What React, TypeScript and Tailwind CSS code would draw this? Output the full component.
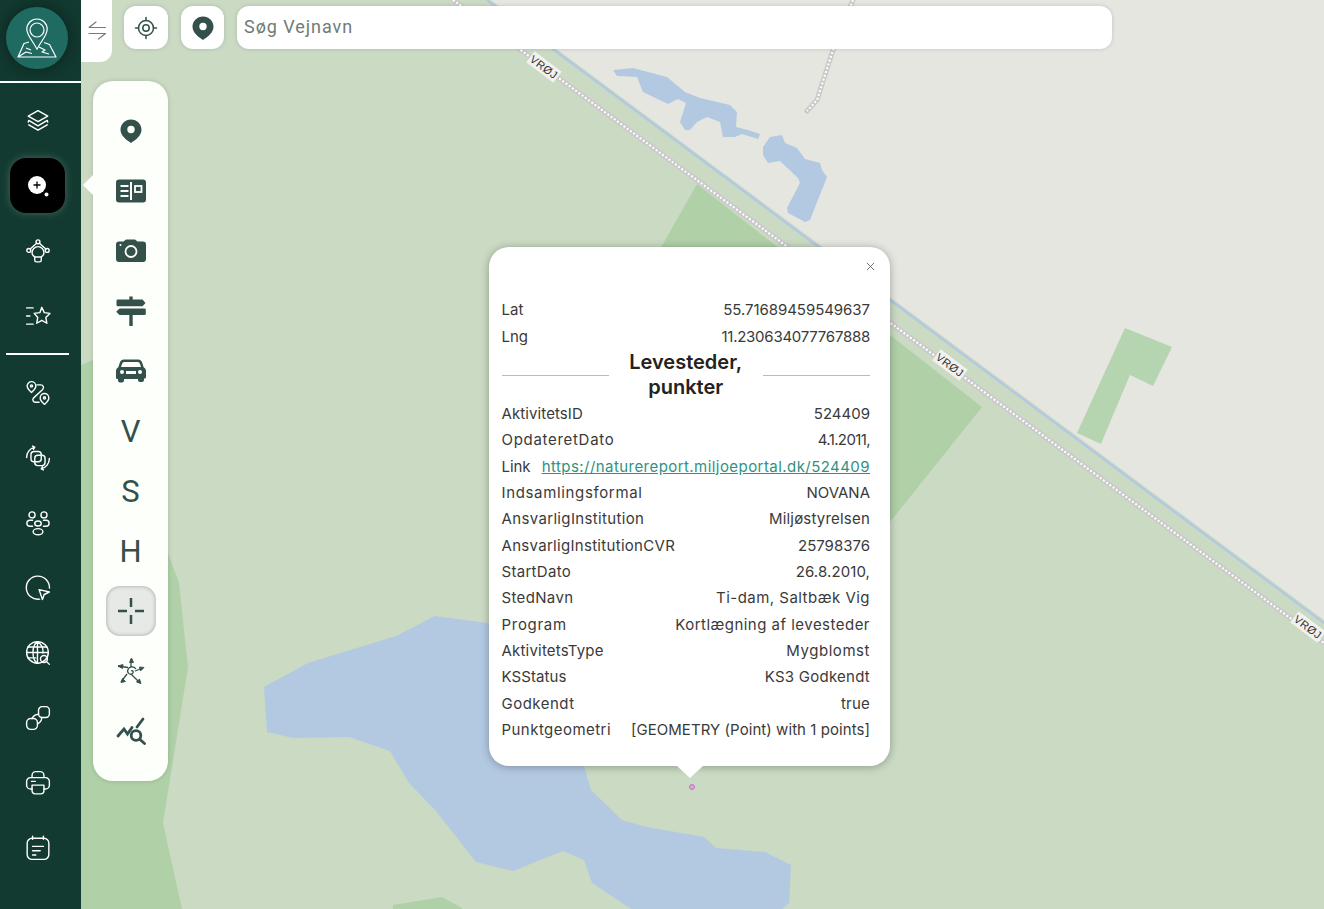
import React from 'react';

const sans = 'font-["Inter","Liberation_Sans",sans-serif]';

const Line: React.FC<{ className?: string; children: React.ReactNode }> = ({ className = 'h-7 w-7', children }) => (
  <svg viewBox="0 0 24 24" className={className} fill="none" stroke="currentColor" strokeWidth="1.300" strokeLinecap="round" strokeLinejoin="round">
    {children}
  </svg>
);

const sideTop = [
  <path key="a" d="M12 2.500 21 7.500 12 12.500 3 7.500Z M3.500 11.500 12 16.500 20.500 11.500 M3.500 15.500 12 20.500 20.500 15.500 M3.500 11.500 3 13 M20.500 11.500 21 13" />,
  null,
  <g key="c"><circle cx="12" cy="3.500" r="1.800" /><circle cx="3.500" cy="11.500" r="1.800" /><circle cx="20.500" cy="11.500" r="1.800" /><path d="M10.700 4.800 4.800 10.200 M13.300 4.800 19.200 10.200 M9 17.500c-1.500-1-2.500-2.300-2.500-4a5.500 5.500 0 0 1 11 0c0 1.700-1 3-2.500 4Z M9 17.500v3a1.500 1.500 0 0 0 1.500 1.500h3a1.500 1.500 0 0 0 1.500-1.500v-3" /></g>,
  <g key="d"><path d="M15.500 4l2.300 4.900 5.200.7-3.800 3.700 1 5.400-4.700-2.700-4.700 2.700 1-5.400L8.500 9.600l5.200-.7Z" /><path d="M1.500 4.500h6 M1.500 12h3 M1.500 19.500h6" /></g>,
];

const sideBottom = [
  <g key="e"><path d="M6 1.500a4 4 0 0 1 4 4c0 2.500-2.500 4.500-4 6-1.500-1.500-4-3.500-4-6a4 4 0 0 1 4-4Z" /><circle cx="6" cy="5.500" r="1" /><path d="M18 12.500a4 4 0 0 1 4 4c0 2.500-2.500 4.500-4 6-1.500-1.500-4-3.500-4-6a4 4 0 0 1 4-4Z" /><circle cx="18" cy="16.500" r="1" /><path d="M11 4.500h3.500a2.500 2.500 0 0 1 1.800 4.300L8 16.500a2.300 2.300 0 0 0 1.700 4H13" /></g>,
  <g key="f"><rect x="5.500" y="6" width="9.500" height="9.500" rx="2.800" /><rect x="9" y="9.500" width="9.500" height="9.500" rx="2.800" /><path d="M1.500 11.500c0-4.500 3-8.500 7.500-9.500 M7 1l2 1-1.200 2 M22.500 12.500c0 4.500-3 8.500-7.500 9.500 M17 23l-2-1 1.200-2" /></g>,
  <g key="g"><circle cx="6.500" cy="4.500" r="2.800" /><circle cx="17.500" cy="4.500" r="2.800" /><ellipse cx="12" cy="12.500" rx="3" ry="2.300" /><ellipse cx="12" cy="20" rx="4.500" ry="2.800" /><path d="M7 9.500H4.500a2.500 2.500 0 0 0 0 5.500H7 M17 9.500h2.500a2.500 2.500 0 0 1 0 5.500H17" /></g>,
  <g key="h"><path d="M13.500 22.300A10.700 10.700 0 1 1 22.600 12" /><path d="M13 13.500l9.500 2.200-4.800 2.300-1.600 4.700Z" /></g>,
  <g key="i"><circle cx="11.500" cy="11.500" r="10" /><path d="M1.500 11.500h20 M2.800 6.500h17.500 M2.800 16.500h7 M11.500 1.500v20 M11.500 1.500C6 5 6 18 11.500 21.500 M11.500 1.500C17 5 17 9 16.500 12" /><circle cx="17.500" cy="17.500" r="3.200" /><path d="M20 20l2.500 2.500" /></g>,
  <g key="j"><rect x="12.500" y="1.500" width="10" height="10" rx="3.200" /><rect x="1.500" y="12.500" width="10" height="10" rx="3.800" /><path d="M12.500 8.500a7 7 0 0 0-6 4 M15.500 11.500a7 7 0 0 1-4 6" /></g>,
  <g key="k"><path d="M6.500 7V5a3.500 3.500 0 0 1 3.500-3.500h4A3.500 3.500 0 0 1 17.500 5v2 M6.500 17.500H5A3.500 3.500 0 0 1 1.500 14v-3.500A3.500 3.500 0 0 1 5 7h14a3.500 3.500 0 0 1 3.500 3.500V14a3.500 3.500 0 0 1-3.500 3.500h-1.500" /><path d="M6.500 14h11v5a3 3 0 0 1-3 3h-5a3 3 0 0 1-3-3Z M6 10.500h3.500" /></g>,
  <g key="l"><rect x="2" y="3" width="20" height="19.500" rx="4.500" /><path d="M7 1v3 M17 1v3 M7 10.500h10 M7 14.500h7 M7 18.500h3" /></g>,
];

const PanelIcon: React.FC<{ children: React.ReactNode }> = ({ children }) => (
  <svg viewBox="0 0 30 30" className="h-[30px] w-[30px] fill-[#34504b]">
    {children}
  </svg>
);

const PIN = 'M15 3.500c5.800 0 10.500 4.600 10.500 10.300 0 5.400-5 9.700-10.500 13.200C9.500 23.500 4.500 19.200 4.500 13.800 4.500 8.100 9.200 3.500 15 3.500Z';

const PinFilled = () => (
  <path fillRule="evenodd" d={`${PIN} M15 9.800a3.700 3.700 0 1 0 0 7.400 3.700 3.700 0 0 0 0-7.400Z`} />
);

const rows: [string, React.ReactNode, string, string][] = [
  ['AktivitetsID', '524409', 'tracking-[0.1px]', ''],
  ['OpdateretDato', '4.1.2011,', 'tracking-[0.7px]', 'tracking-[-0.6px]'],
  ['Link', <a href="#" className="text-[#2e9283] underline">https://naturereport.miljoeportal.dk/524409</a>, 'tracking-[-0.1px]', 'tracking-[0.44px]'],
  ['Indsamlingsformal', 'NOVANA', 'tracking-[0.65px]', ''],
  ['AnsvarligInstitution', 'Miljøstyrelsen', 'tracking-[0.35px]', 'tracking-[0.2px]'],
  ['AnsvarligInstitutionCVR', '25798376', 'tracking-[0.3px]', ''],
  ['StartDato', '26.8.2010,', 'tracking-[0.3px]', 'tracking-[0.1px]'],
  ['StedNavn', 'Ti-dam, Saltbæk Vig', 'tracking-[0.35px]', 'tracking-[0.47px]'],
  ['Program', 'Kortlægning af levesteder', 'tracking-[0.7px]', 'tracking-[0.48px]'],
  ['AktivitetsType', 'Mygblomst', 'tracking-[0.2px]', 'tracking-[0.55px]'],
  ['KSStatus', 'KS3 Godkendt', 'tracking-[0.1px]', 'tracking-[0.25px]'],
  ['Godkendt', 'true', 'tracking-[0.5px]', 'tracking-[0.2px]'],
  ['Punktgeometri', '[GEOMETRY (Point) with 1 points]', 'tracking-[0.46px]', 'tracking-[0.06px]'],
];

const Row: React.FC<{ label: string; value: React.ReactNode; labelClass?: string; valueClass?: string }> = ({ label, value, labelClass = '', valueClass = '' }) => (
  <div className="flex h-[26.350px] items-center justify-between whitespace-nowrap leading-[26px]">
    <span className={labelClass}>{label}</span>
    <span className={valueClass}>{value}</span>
  </div>
);

const RoadLabel: React.FC<{ x: number; y: number }> = ({ x, y }) => (
  <g transform={`translate(${x} ${y}) rotate(37)`}>
    <rect x="-17" y="-7" width="34" height="14" fill="#f1f1ef" />
    <text textAnchor="middle" y="4" fontFamily="Liberation Sans" fontSize="11" fill="#333" letterSpacing="0.5">VRØJ</text>
  </g>
);

const MapLayer = () => (
  <svg viewBox="81 0 1243 909" className="absolute inset-0 h-full w-full">
    <rect x="81" y="0" width="1243" height="909" fill="#cadac3" />
    <polygon points="491,0 1324,620 1324,0" fill="#e5e6e0" />
    <polygon points="697,184 982,407 890,522 780,430 620,320" fill="#b0d0a8" />
    <polygon points="81,365 93,360 168,553 179,583 185,640 188,667 163,823 182,909 81,909" fill="#b0d0a8" />
    <polygon points="393,905 442,897 462,908 462,909 393,909" fill="#b0d0a8" />
    <polygon points="1125,328 1172,347 1153,386 1130,375 1108,427 1101,444 1077,433" fill="#b5d4b0" />
    <polygon fill="#b3c9e2" points="264,687 308,663 396,636 435,616 487,623 600,700 584,766 591,790 622,820 647,827 704,837 716,848 765,852 791,865 789,903 782,909 631,909 592,883 584,860 563,851 513,871 476,862 436,811 409,783 390,751 349,737 293,738 267,732" />
    <polygon fill="#b3c9e2" points="613,70 633,68 667,77 685,92 700,98 730,105 737,112 736,127 748,130 760,134 758,139 742,134 735,137 723,137 720,122 707,117 697,122 690,130 685,130 680,122 686,103 678,99 668,104 643,92 637,77 617,76" />
    <polygon fill="#b3c9e2" points="770,137 782,135 785,143 797,148 805,159 820,163 822,170 827,177 810,220 805,222 788,213 787,208 800,183 798,178 780,161 768,163 763,155 763,147" />
    <line x1="487" y1="0" x2="1324" y2="623" stroke="#b3c9e2" strokeWidth="2.500" />
    <line x1="453" y1="0" x2="1324" y2="643" stroke="#cbc8cb" strokeWidth="5" />
    <line x1="453" y1="0" x2="1324" y2="643" stroke="#ffffff" strokeWidth="2.200" strokeDasharray="2 2" />
    <polyline points="853,0 833,50 817,100 807,111" fill="none" stroke="#c9c9c9" strokeWidth="5" strokeLinecap="round" />
    <polyline points="853,0 833,50 817,100 807,111" fill="none" stroke="#ffffff" strokeWidth="2.200" strokeDasharray="2 2" />
    <RoadLabel x={544} y={67} />
    <RoadLabel x={950} y={365} />
    <RoadLabel x={1308} y={627} />
    <circle cx="692" cy="787" r="2.500" fill="#e89be8" stroke="#b77fb7" strokeWidth="1" />
  </svg>
);

export default function App() {
  return (
    <div className={`flex h-screen w-full overflow-hidden ${sans}`}>
      <aside className="flex w-[81px] shrink-0 flex-col bg-[#123a30] text-white">
        <div className="flex h-[81px] w-[74px] shrink-0 items-center justify-center">
          <div className="flex h-[62px] w-[62px] -translate-y-[3px] items-center justify-center rounded-full bg-[#1f6b62] shadow-[0_0_18px_rgba(0,0,0,0.45)]">
            <svg viewBox="0 0 62 62" className="h-[62px] w-[62px]" fill="none" stroke="#fff" strokeWidth="1.200" strokeLinejoin="round">
              <path d="M31 12c5.700 0 10.200 4.500 10.200 10.200 0 6-5.700 11-10.200 20-4.500-9-10.200-14-10.200-20C20.800 16.500 25.300 12 31 12Z" />
              <circle cx="31" cy="23" r="7" />
              <path d="M23 35l-5 1.500-6 13.500h38l-6.500-12.500-5.500-2 M12 50l8-5 6 1.500 M20 41l5 2 M33 40l6 3-3 2 7 2" />
            </svg>
          </div>
        </div>
        <div className="h-[2px] w-full shrink-0 bg-white" />
        <div className="mt-[5px] flex w-[75px] flex-col items-center">
          {sideTop.map((icon, i) =>
            icon ? (
              <div key={i} className="flex h-[65px] w-full items-center justify-center">
                <Line className="h-[26px] w-[26px]">{icon}</Line>
              </div>
            ) : (
              <div key={i} className="flex h-[65px] w-full items-center justify-center">
                <div className="flex h-[55px] w-[55px] items-center justify-center rounded-2xl bg-black shadow-[0_0_8px_rgba(255,255,255,0.22)]">
                  <svg viewBox="0 0 24 24" className="h-6 w-6">
                    <circle cx="11" cy="11" r="9" fill="#fff" />
                    <path d="M11 7.500v7 M7.500 11h7" stroke="#000" strokeWidth="1.300" />
                    <circle cx="20.500" cy="20.500" r="2" fill="#fff" />
                  </svg>
                </div>
              </div>
            ),
          )}
        </div>
        <div className="mt-[5px] mb-[5px] ml-[6px] h-[2px] w-[63px] shrink-0 bg-white" />
        <div className="flex w-[75px] flex-col items-center">
          {sideBottom.map((icon, i) => (
            <div key={i} className="flex h-[65px] w-full items-center justify-center">
              <Line className="h-[26px] w-[26px]">{icon}</Line>
            </div>
          ))}
        </div>
      </aside>

      <main className="relative flex-1 overflow-hidden">
        <MapLayer />

        {/* top bar */}
        <div className="absolute top-0 left-0 flex items-start">
          <button className="flex h-[62px] w-[31px] items-center justify-center rounded-br-xl bg-white">
            <svg viewBox="0 0 20 20" className="h-5 w-5" fill="none" stroke="#6c7f7a" strokeWidth="1.200" strokeLinecap="round" strokeLinejoin="round">
              <path d="M9 1 2 6.500h16.500 M2 12.500h16.500L11.500 18" />
            </svg>
          </button>
          <button className="mt-[6px] ml-[12px] flex h-[43px] w-[44px] items-center justify-center rounded-xl bg-white shadow-[0_0_4px_rgba(0,0,0,0.15)]">
            <svg viewBox="0 0 24 24" className="h-6 w-6" fill="none" stroke="#34504b" strokeWidth="1.500" strokeLinecap="round">
              <circle cx="12" cy="12" r="7.500" />
              <circle cx="12" cy="12" r="3.200" />
              <path d="M12 1.500v3 M12 19.500v3 M1.500 12h3 M19.500 12h3" />
            </svg>
          </button>
          <button className="mt-[6px] ml-[13px] flex h-[43px] w-[43px] items-center justify-center rounded-xl bg-white shadow-[0_0_4px_rgba(0,0,0,0.15)]">
            <PanelIcon><PinFilled /></PanelIcon>
          </button>
          <div className="mt-[6px] ml-[13px] flex h-[43px] w-[875px] items-center rounded-xl bg-white px-[7px] pb-[2px] font-['Roboto',sans-serif] text-[18px] tracking-[0.95px] text-[#6f7b78] shadow-[0_0_4px_rgba(0,0,0,0.15)]">
            Søg Vejnavn
          </div>
        </div>

        {/* tool panel */}
        <div className="absolute top-[81px] left-[12px] flex h-[700px] w-[75px] flex-col items-center rounded-[20px] bg-[#fdfffb] py-5 shadow-[0_0_5px_rgba(0,0,0,0.15)]">
          <div className="absolute top-[94px] -left-[10px] h-0 w-0 border-y-[10px] border-r-[10px] border-y-transparent border-r-[#fdfffb]" />
          <div className="flex h-[60px] items-center justify-center">
            <PanelIcon><PinFilled /></PanelIcon>
          </div>
          <div className="flex h-[60px] items-center justify-center">
            <svg viewBox="0 0 30 24" className="h-6 w-[30px]" fill="none">
              <rect y="0.500" width="30" height="23" rx="3" fill="#34504b" />
              <path d="M4.500 7h8 M4.500 12h8 M4.500 17h8 M15 3v18" stroke="#fff" strokeWidth="2" />
              <rect x="19" y="7" width="6.500" height="6" stroke="#fff" strokeWidth="1.800" />
            </svg>
          </div>
          <div className="flex h-[60px] items-center justify-center">
            <svg viewBox="0 0 30 24" className="h-6 w-[30px]">
              <path fill="#34504b" d="M3 2.500h4.500L10 .5h9l2.500 2H27a3 3 0 0 1 3 3V20a3 3 0 0 1-3 3H3a3 3 0 0 1-3-3V5.500a3 3 0 0 1 3-3Z" />
              <circle cx="15" cy="12.500" r="5.500" fill="none" stroke="#fff" strokeWidth="1.800" />
              <circle cx="4.500" cy="6" r="1" fill="#fff" />
            </svg>
          </div>
          <div className="flex h-[60px] items-center justify-center">
            <PanelIcon>
              <path d="M13.300 0.500h3.400v3H26.500l3 3.400-3 3.400H1.800a1.300 1.300 0 0 1-1.300-1.300V4.800a1.300 1.300 0 0 1 1.300-1.300h11.500Z" />
              <path d="M3.500 12.500h25a1.300 1.300 0 0 1 1.300 1.300v3.900a1.300 1.300 0 0 1-1.300 1.300H16.700V30h-3.400V19H3.500L.2 15.700Z" />
            </PanelIcon>
          </div>
          <div className="flex h-[60px] items-center justify-center">
            <svg viewBox="0 0 30 24" className="h-6 w-[30px]">
              <path fillRule="evenodd" fill="#34504b" d="M8 .5h14c2.500 0 3.500 1.500 4.300 3.500l1.400 4.200c1.300.8 2.300 2 2.300 3.600v6.200c0 1-.7 1.500-1.500 1.500H28v1.500a2 2 0 0 1-2 2h-2a2 2 0 0 1-2-2V20H8v1.500a2 2 0 0 1-2 2H4a2 2 0 0 1-2-2V20h-.5C.7 20 0 19.500 0 18.500V11.800c0-1.600 1-2.800 2.300-3.600L3.700 4C4.500 2 5.500.5 8 .5Z M8.500 3C7 3 6.500 3.700 6 5L5 8h20l-1-3c-.5-1.300-1-2-2.500-2Z M6 11a2 2 0 1 0 0 4 2 2 0 0 0 0-4Z M24 11a2 2 0 1 0 0 4 2 2 0 0 0 0-4Z M10 12v3h10v-3Z" />
            </svg>
          </div>
          {['V', 'S', 'H'].map((letter) => (
            <div key={letter} className="flex h-[60px] items-center justify-center pt-[2px] font-['Roboto',sans-serif] text-[31px] text-[#34504b]">
              {letter}
            </div>
          ))}
          <div className="flex h-[60px] items-center justify-center">
            <div className="flex h-[50px] w-[50px] items-center justify-center rounded-[14px] bg-[#e7e9e7] shadow-[inset_0_0_4px_rgba(0,0,0,0.3)]">
              <svg viewBox="0 0 26 26" className="h-[26px] w-[26px]" stroke="#34504b" strokeWidth="2.500">
                <path d="M13 0v9 M13 17v9 M0 13h9 M17 13h9" />
              </svg>
            </div>
          </div>
          <div className="flex h-[60px] items-center justify-center">
            <svg viewBox="0 0 30 30" className="h-[30px] w-[30px]" fill="#34504b" stroke="#34504b" strokeWidth="0.900">
              <path fill="none" strokeWidth="1.300" d="M15 15c2-1 3 1 1.500 2.500-2.500 2-6-1-4.500-4 1.500-3.500 6-3.500 8-.5 M15 3v8 M2 10l10 1.500 M5 26l6-8 M24 27l-9-9 M27 12l-8 3" />
              <path d="M15.500 2l-2 4.500h4Z M2 10l4.500 2.500.5-4Z M5 26.500l4.500-1-3-3Z M25 27.500l-1.500-4.500-3 3Z M28 11.500l-4.500-.5 1 4Z" />
            </svg>
          </div>
          <div className="flex h-[60px] items-center justify-center">
            <svg viewBox="0 0 30 30" className="h-[30px] w-[30px]" fill="none" stroke="#34504b" strokeWidth="2.800" strokeLinecap="round">
              <path d="M2 20 8 13l3.500 5L16 11.500 M21 11l6-8" />
              <circle cx="20" cy="19.500" r="4.800" />
              <path d="M24 23.500l4.500 4" />
            </svg>
          </div>
        </div>

        {/* popup */}
        <div className="absolute top-[247px] left-[408px] h-[519px] w-[401px] rounded-[20px] bg-white pt-[50px] pr-[20px] pl-[12.500px] text-[15px] text-[#3a3a3a] shadow-[0_1px_8px_rgba(0,0,0,0.3)]">
          <button className="absolute top-[15px] right-[15px] text-[#666]">
            <svg viewBox="0 0 10 10" className="h-[9px] w-[9px]" stroke="currentColor" strokeWidth="1">
              <path d="M1 1l8 8 M9 1l-8 8" />
            </svg>
          </button>
          <Row label="Lat" value="55.71689459549637" valueClass="tracking-[-0.05px]" />
          <Row label="Lng" value="11.230634077767888" valueClass="tracking-[-0.25px]" labelClass="tracking-[-0.1px]" />
          <div className="flex items-center">
            <div className="mt-[1px] h-px w-[107px] bg-[#bbb]" />
            <h2 className="flex-1 text-center text-[20px] leading-[25px] font-semibold text-[#222]">
              Levesteder,
              <br />
              punkter
            </h2>
            <div className="mt-[1px] h-px w-[107px] bg-[#bbb]" />
          </div>
          <div className="mt-[1px]">
            {rows.map(([label, value, labelClass, valueClass]) => (
              <Row key={label} label={label} value={value} labelClass={labelClass} valueClass={valueClass} />
            ))}
          </div>
          <div className="absolute -bottom-[12px] left-[188px] h-0 w-0 border-x-[13px] border-t-[12px] border-x-transparent border-t-white" />
        </div>
      </main>
    </div>
  );
}
